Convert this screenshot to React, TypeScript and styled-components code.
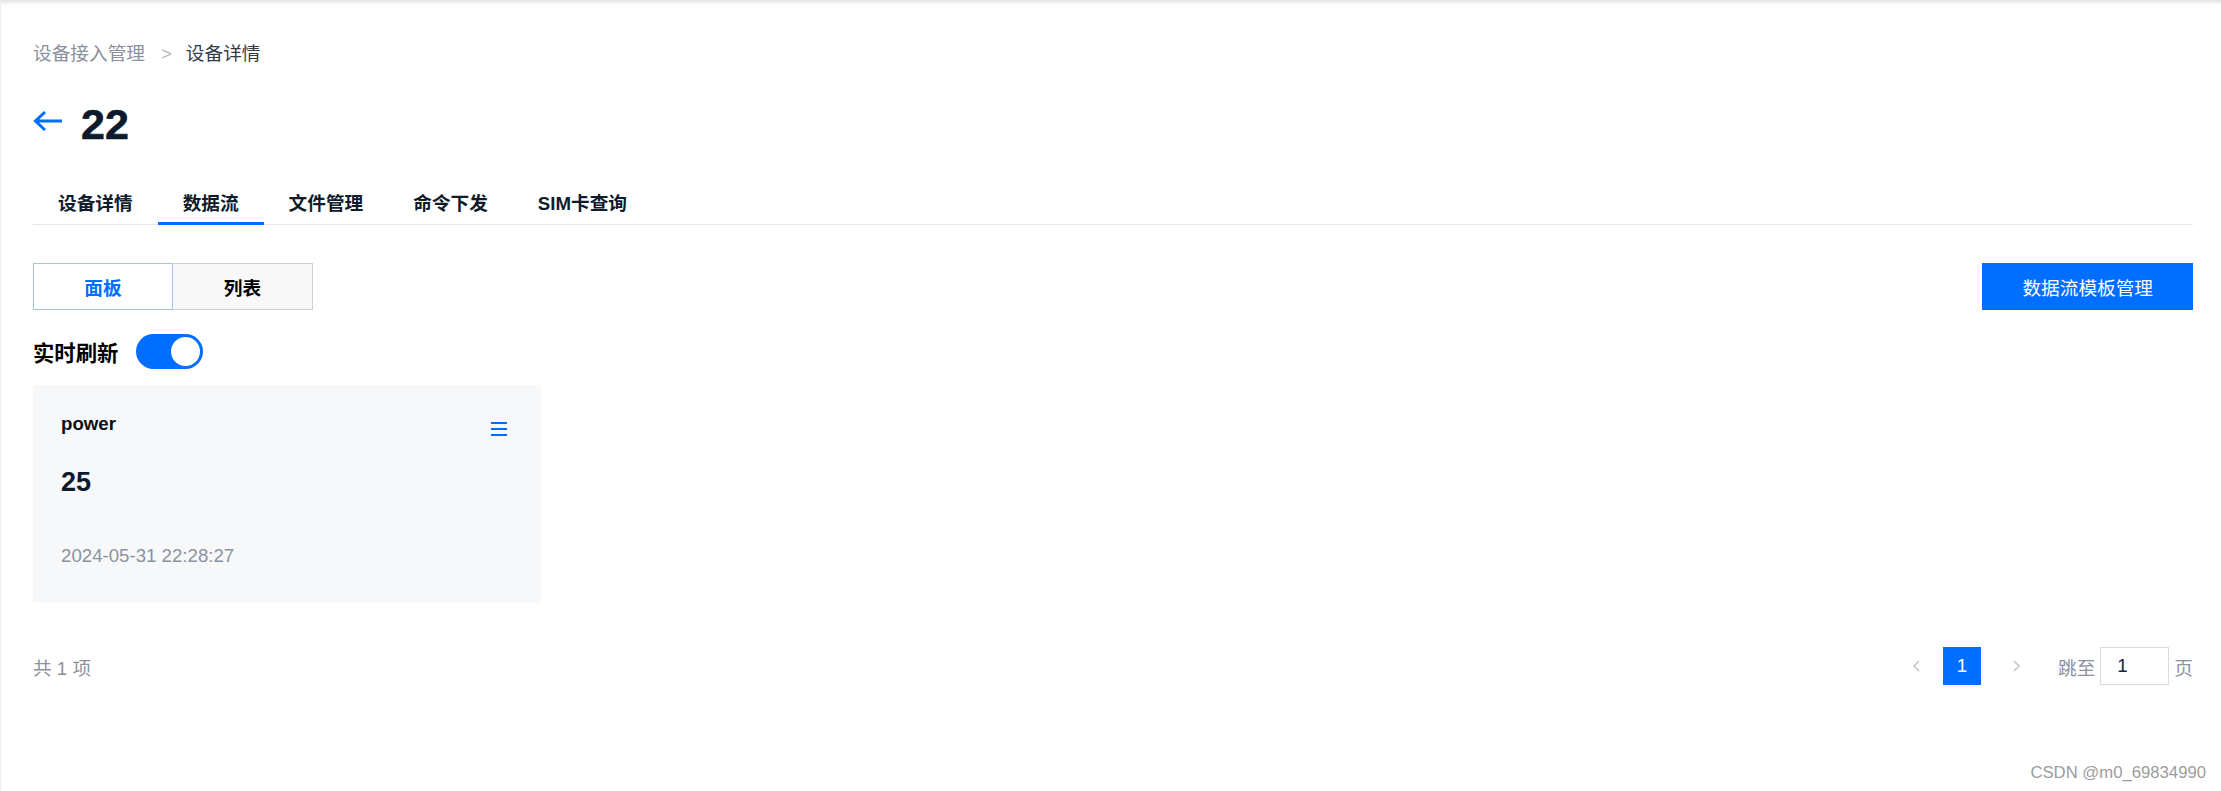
import { FC, useState } from "react";
import styled, { createGlobalStyle } from "styled-components";

const BLUE = "#006eff";

const GlobalStyle = createGlobalStyle`
  body {
    margin: 0;
    background: #ffffff;
    font-family: "Liberation Sans", "Noto Sans CJK SC", sans-serif;
  }
`;

const Page = styled.div`
  position: relative;
  min-height: 791px;
  box-sizing: border-box;
  border-left: 1px solid #ededed;
  background: #ffffff;
`;

const TopShade = styled.div`
  height: 5px;
  background: linear-gradient(to bottom, #e3e3e3, #ffffff);
`;

const Content = styled.div`
  padding: 0 28px 0 32px;
`;

const Breadcrumb = styled.nav`
  margin-top: 36px;
  display: flex;
  align-items: center;
  height: 26px;
  font-size: 18.67px;
  line-height: 26px;
`;

const Crumb = styled.span<{ $current?: boolean }>`
  color: ${(p) => (p.$current ? "#333b47" : "#8a919c")};
`;

const CrumbSep = styled.span`
  color: #b4b8bf;
  margin: 0 14px 0 16px;
`;

const TitleRow = styled.div`
  margin-top: 37px;
  height: 40px;
  display: flex;
  align-items: center;
  gap: 18px;

  svg {
    margin-bottom: 6px;
  }
`;

const TitleText = styled.h1`
  margin: 0;
  font-size: 43px;
  line-height: 40px;
  font-weight: 700;
  color: #0c1a2c;
  -webkit-text-stroke: 0.6px #0c1a2c;
`;

const TabBar = styled.div`
  margin-top: 34px;
  display: flex;
  border-bottom: 1px solid #e6e8eb;
`;

const TabItem = styled.div<{ $active?: boolean }>`
  position: relative;
  height: 46px;
  padding: 0 25px;
  display: flex;
  align-items: center;
  font-size: 18.67px;
  font-weight: 700;
  color: #101c2c;
  cursor: pointer;

  &::after {
    content: "";
    display: ${(p) => (p.$active ? "block" : "none")};
    position: absolute;
    left: 0;
    right: 0;
    bottom: -1px;
    height: 3px;
    background: ${BLUE};
  }
`;

const Toolbar = styled.div`
  margin-top: 38px;
  display: flex;
  justify-content: space-between;
  align-items: center;
`;

const Segmented = styled.div`
  display: flex;
`;

const Segment = styled.button<{ $active?: boolean }>`
  width: 140px;
  height: 47px;
  box-sizing: border-box;
  font-family: inherit;
  font-size: 18.67px;
  font-weight: 700;
  cursor: pointer;
  background: ${(p) => (p.$active ? "#ffffff" : "#f8f8f8")};
  color: ${(p) => (p.$active ? BLUE : "#000000")};
  border: 1px solid ${(p) => (p.$active ? "#a3c3f2" : "#cfd3d9")};
  ${(p) => (p.$active ? "" : "border-left: none;")}
`;

const PrimaryButton = styled.button`
  height: 47px;
  padding: 0 40px;
  border: none;
  background: ${BLUE};
  color: #ffffff;
  font-family: inherit;
  font-size: 18.67px;
  cursor: pointer;
`;

const SwitchRow = styled.div`
  margin-top: 24px;
  display: flex;
  align-items: center;
  gap: 18px;
`;

const SwitchLabel = styled.span`
  font-size: 21.33px;
  font-weight: 700;
  color: #000000;
`;

const SwitchTrack = styled.div<{ $on: boolean }>`
  width: 67px;
  height: 35px;
  box-sizing: border-box;
  padding: 3px;
  border-radius: 18px;
  display: flex;
  justify-content: ${(p) => (p.$on ? "flex-end" : "flex-start")};
  background: ${(p) => (p.$on ? BLUE : "#c5c8ce")};
  cursor: pointer;
`;

const SwitchKnob = styled.div`
  width: 29px;
  height: 29px;
  border-radius: 50%;
  background: #ffffff;
`;

const CardGrid = styled.div`
  margin-top: 16px;
  display: flex;
  gap: 20px;
`;

const Card = styled.div`
  width: 508px;
  height: 218px;
  box-sizing: border-box;
  padding: 28px 34px 0 28px;
  background: #f7f8fa;
`;

const CardHeader = styled.div`
  display: flex;
  justify-content: space-between;
  align-items: flex-start;

  svg {
    margin-top: 9px;
  }
`;

const CardName = styled.span`
  font-size: 18.67px;
  line-height: 22px;
  font-weight: 700;
  color: #0a0f17;
`;

const CardValue = styled.div`
  margin-top: 30px;
  font-size: 27px;
  line-height: 32px;
  font-weight: 700;
  color: #0c1a2c;
`;

const CardTime = styled.div`
  margin-top: 47px;
  font-size: 18.67px;
  line-height: 22px;
  color: #8b929d;
`;

const Pager = styled.div`
  margin-top: 44px;
  height: 38px;
  display: flex;
  justify-content: space-between;
  align-items: center;
`;

const PagerTotal = styled.span`
  font-size: 18.67px;
  color: #8b929d;
`;

const PagerControls = styled.div`
  display: flex;
  align-items: center;
  font-size: 18.67px;
  color: #8b929d;
`;

const PagerArrow = styled.button`
  width: 38px;
  height: 38px;
  padding: 0;
  border: none;
  background: transparent;
  display: flex;
  align-items: center;
  justify-content: center;
  cursor: pointer;
`;

const PageNumber = styled.button<{ $active?: boolean }>`
  width: 38px;
  height: 38px;
  margin: 0 16px 0 8px;
  border: none;
  font-family: inherit;
  font-size: 18.67px;
  background: ${(p) => (p.$active ? BLUE : "transparent")};
  color: ${(p) => (p.$active ? "#ffffff" : "#333333")};
`;

const JumpLabel = styled.span`
  margin-left: 23px;
`;

const JumpInput = styled.input`
  width: 69px;
  height: 38px;
  box-sizing: border-box;
  margin: 0 5px;
  padding: 0 16px;
  border: 1px solid #d9dce1;
  outline: none;
  font-family: inherit;
  font-size: 18.67px;
  color: #1a2433;
`;

const Watermark = styled.span`
  position: absolute;
  right: 15px;
  bottom: 8px;
  font-size: 16.7px;
  color: #9c9c9c;
`;

const BackArrow: FC = () => (
  <svg width="30" height="22" viewBox="0 0 30 22" fill="none">
    <path
      d="M29 11H3M12 2L2.5 11L12 20"
      stroke={BLUE}
      strokeWidth="3"
      strokeLinejoin="miter"
    />
  </svg>
);

const MenuIcon: FC = () => (
  <svg width="16" height="14" viewBox="0 0 16 14">
    <rect x="0" y="0" width="16" height="2" fill={BLUE} />
    <rect x="0" y="6" width="16" height="2" fill={BLUE} />
    <rect x="0" y="12" width="16" height="2" fill={BLUE} />
  </svg>
);

const Chevron: FC<{ dir: "left" | "right" }> = ({ dir }) => (
  <svg width="9" height="12" viewBox="0 0 9 12" fill="none">
    <path
      d={dir === "left" ? "M7 1L2 6L7 11" : "M2 1L7 6L2 11"}
      stroke="#c3c7cd"
      strokeWidth="1.6"
    />
  </svg>
);

const tabs = ["设备详情", "数据流", "文件管理", "命令下发", "SIM卡查询"];

const streams = [
  { name: "power", value: "25", time: "2024-05-31 22:28:27" },
];

const App: FC = () => {
  const [activeTab, setActiveTab] = useState(1);
  const [view, setView] = useState<"panel" | "list">("panel");
  const [live, setLive] = useState(true);

  return (
    <>
      <GlobalStyle />
      <Page>
        <TopShade />
        <Content>
          <Breadcrumb>
            <Crumb>设备接入管理</Crumb>
            <CrumbSep>&gt;</CrumbSep>
            <Crumb $current>设备详情</Crumb>
          </Breadcrumb>

          <TitleRow>
            <BackArrow />
            <TitleText>22</TitleText>
          </TitleRow>

          <TabBar>
            {tabs.map((t, i) => (
              <TabItem key={t} $active={i === activeTab} onClick={() => setActiveTab(i)}>
                {t}
              </TabItem>
            ))}
          </TabBar>

          <Toolbar>
            <Segmented>
              <Segment $active={view === "panel"} onClick={() => setView("panel")}>
                面板
              </Segment>
              <Segment $active={view === "list"} onClick={() => setView("list")}>
                列表
              </Segment>
            </Segmented>
            <PrimaryButton>数据流模板管理</PrimaryButton>
          </Toolbar>

          <SwitchRow>
            <SwitchLabel>实时刷新</SwitchLabel>
            <SwitchTrack $on={live} onClick={() => setLive(!live)}>
              <SwitchKnob />
            </SwitchTrack>
          </SwitchRow>

          <CardGrid>
            {streams.map((s) => (
              <Card key={s.name}>
                <CardHeader>
                  <CardName>{s.name}</CardName>
                  <MenuIcon />
                </CardHeader>
                <CardValue>{s.value}</CardValue>
                <CardTime>{s.time}</CardTime>
              </Card>
            ))}
          </CardGrid>

          <Pager>
            <PagerTotal>共 {streams.length} 项</PagerTotal>
            <PagerControls>
              <PagerArrow>
                <Chevron dir="left" />
              </PagerArrow>
              <PageNumber $active>1</PageNumber>
              <PagerArrow>
                <Chevron dir="right" />
              </PagerArrow>
              <JumpLabel>跳至</JumpLabel>
              <JumpInput defaultValue="1" />
              <span>页</span>
            </PagerControls>
          </Pager>
        </Content>
        <Watermark>CSDN @m0_69834990</Watermark>
      </Page>
    </>
  );
};

export default App;
